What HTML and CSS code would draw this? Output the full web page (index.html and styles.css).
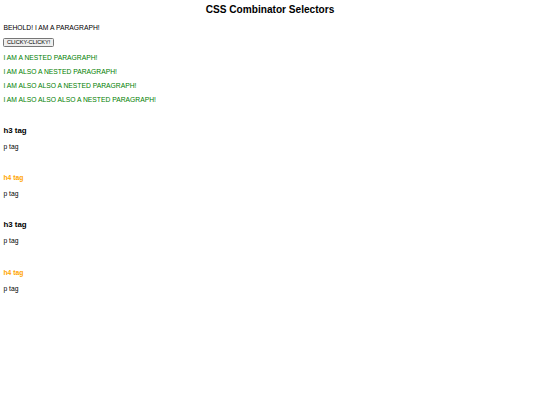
FILE: index.html
```html
<!DOCTYPE html>
<html>
<head>
<meta charset="utf-8">
<title>CSS Combinator Selectors</title>
<link rel="stylesheet" href="styles.css">
</head>
<body class="page">
<div class="scaled">
  <h1 class="title">CSS Combinator Selectors</h1>
  <p class="lead">Behold! I am a paragraph!</p>
  <button class="btn">Clicky-clicky!</button>
  <div class="nested">
    <p class="nested-p">I am a nested paragraph!</p>
    <p class="nested-p">I am also a nested paragraph!</p>
    <p class="nested-p">I am also also a nested paragraph!</p>
    <p class="nested-p">I am also also also a nested paragraph!</p>
  </div>
  <div class="group">
    <h3 class="h3">h3 tag</h3>
    <p class="ptag">p tag</p>
    <h4 class="h4">h4 tag</h4>
    <p class="ptag">p tag</p>
  </div>
  <div class="group">
    <h3 class="h3">h3 tag</h3>
    <p class="ptag">p tag</p>
    <h4 class="h4">h4 tag</h4>
    <p class="ptag">p tag</p>
  </div>
</div>
</body>
</html>
```
FILE: styles.css
```css
.page {
  margin: 0;
  background: #fff;
  font-family: "Liberation Sans", Arial, sans-serif;
  color: #000;
}
.scaled {
  zoom: 0.421875;
  padding: 8px;
}
.title {
  text-align: center;
  font-size: 24px;
  margin: 2px 0 21px;
}
.lead, .nested-p, .ptag {
  font-size: 16px;
  margin: 16px 0;
  text-transform: uppercase;
}
.ptag { text-transform: none; }
.nested { padding-top: 2.4px; }
.nested-p { color: green; }
.btn {
  font-family: "Liberation Sans", Arial, sans-serif;
  font-size: 13.33px;
  text-transform: uppercase;
}
.h3 { font-size: 18.72px; margin: 18.72px 0; padding-top: 36.5px; }
.h4 { font-size: 16px; margin: 21.28px 0; padding-top: 36.5px; color: orange; }
```
